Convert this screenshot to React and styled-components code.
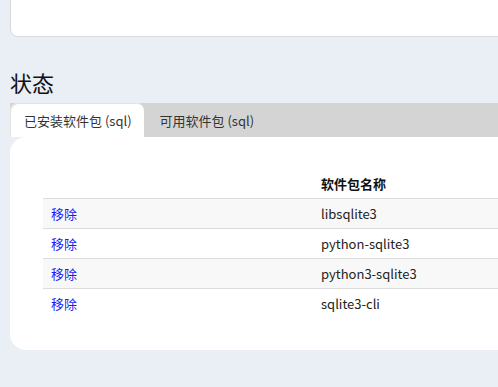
import React from "react";
import styled, { createGlobalStyle } from "styled-components";

const Global = createGlobalStyle`
  html, body { margin: 0; padding: 0; overflow: hidden; }
  body {
    background: #eaeef5;
    font-family: "Noto Sans CJK SC", "Noto Sans", sans-serif;
    color: #222;
    font-size: 13px;
  }
`;

const Page = styled.div`
  width: 1000px;
  padding: 0 0 40px 10px;
`;

const TopCard = styled.div`
  height: 47px;
  margin-top: -10px;
  background: #fff;
  border: 1px solid #d9d9d9;
  border-radius: 8px;
  box-sizing: border-box;
`;

const Heading = styled.h2`
  margin: 30px 0 6px;
  font-size: 22px;
  font-weight: 400;
  line-height: 30px;
  color: #111;
`;

const TabBar = styled.div`
  display: flex;
  height: 34px;
  background: #d4d4d4;
`;

const Tab = styled.div`
  display: flex;
  align-items: center;
  padding-left: ${(p) => (p.$active ? "14px" : "16px")};
  padding-right: ${(p) => (p.$active ? "12px" : "16px")};
  background: ${(p) => (p.$active ? "#fff" : "transparent")};
  border-radius: 8px 8px 0 0;
  color: #333;
  font-size: 13px;
  ${(p) => p.$active && "box-shadow: inset 1px 1px 0 #e2e2e2;"}
`;

const Panel = styled.div`
  background: #fff;
  border-radius: 16px;
  padding: 31px 0 32px 33px;
`;

const Table = styled.table`
  width: 100%;
  border-collapse: collapse;
  font-size: 13px;
`;

const Th = styled.th`
  height: 30px;
  padding: 0 8px;
  text-align: left;
  font-weight: 700;
  color: #111;
  width: ${(p) => p.$w || "auto"};
`;

const Row = styled.tr`
  background: ${(p) => (p.$striped ? "#f8f8f8" : "#fff")};
  border-top: 1px solid #dcdcdc;
`;

const Td = styled.td`
  height: 29px;
  padding: 0 8px;
  color: #222;
`;

const RemoveLink = styled.a`
  color: #1a1aff;
  text-decoration: none;
  cursor: pointer;
`;

const packages = ["libsqlite3", "python-sqlite3", "python3-sqlite3", "sqlite3-cli"];

export default function App() {
  return (
    <>
      <Global />
      <Page>
        <TopCard />
        <Heading>状态</Heading>
        <TabBar>
          <Tab $active>已安装软件包 (sql)</Tab>
          <Tab>可用软件包 (sql)</Tab>
        </TabBar>
        <Panel>
          <Table>
            <thead>
              <tr>
                <Th $w="254px"></Th>
                <Th>软件包名称</Th>
              </tr>
            </thead>
            <tbody>
              {packages.map((p, i) => (
                <Row key={p} $striped={i % 2 === 0}>
                  <Td>
                    <RemoveLink>移除</RemoveLink>
                  </Td>
                  <Td>{p}</Td>
                </Row>
              ))}
            </tbody>
          </Table>
        </Panel>
      </Page>
    </>
  );
}
